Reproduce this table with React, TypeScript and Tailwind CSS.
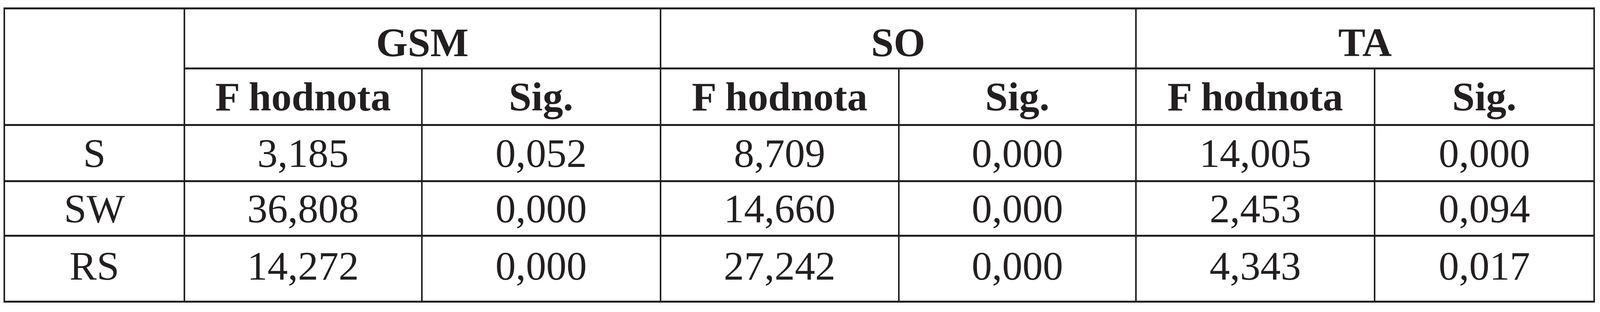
import React from "react";

const rows = [
  ["S", "3,185", "0,052", "8,709", "0,000", "14,005", "0,000"],
  ["SW", "36,808", "0,000", "14,660", "0,000", "2,453", "0,094"],
  ["RS", "14,272", "0,000", "27,242", "0,000", "4,343", "0,017"],
];

const rowPad = ["", "", "pb-[14px]"];

export default function App() {
  const cell = "bg-white flex items-center justify-center leading-none whitespace-nowrap";
  return (
    <div
      className="w-full h-[800px] bg-white pl-[0.23%] pr-[0.32%] pt-[19px] text-[#231f20]"
      style={{ fontFamily: '"Liberation Serif", "Times New Roman", serif' }}
    >
      <div className="grid w-full h-[757px] bg-[#231f20] px-[4px] py-[5px] gap-x-[4px] gap-y-[5px] text-[104px] grid-cols-[689fr_911fr_916fr_915fr_910fr_916fr_842fr] grid-rows-[149px_140px_139px_135px_164px]">
        <div className={`${cell} row-span-2`}></div>
        <div className={`${cell} col-span-2 font-bold pt-[20px]`}>GSM</div>
        <div className={`${cell} col-span-2 font-bold pt-[20px]`}>SO</div>
        <div className={`${cell} col-span-2 font-bold pt-[20px]`}>TA</div>
        {["F hodnota", "Sig.", "F hodnota", "Sig.", "F hodnota", "Sig."].map((t, i) => (
          <div key={i} className={`${cell} font-bold`}>
            {t}
          </div>
        ))}
        {rows.map((r, ri) =>
          r.map((v, ci) => (
            <div key={`${ri}-${ci}`} className={`${cell} ${rowPad[ri]}`}>
              {v}
            </div>
          ))
        )}
      </div>
    </div>
  );
}
